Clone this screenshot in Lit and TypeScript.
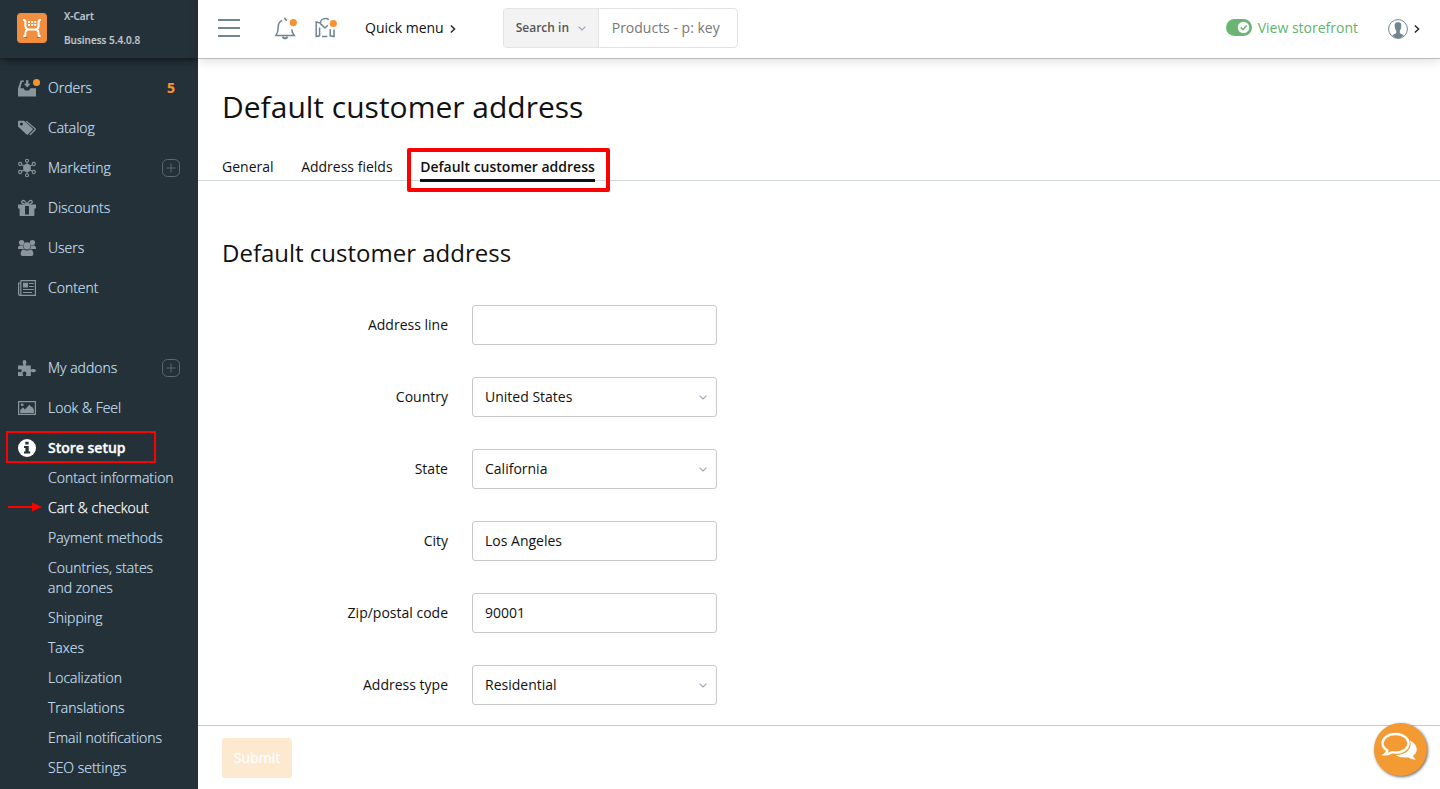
import { LitElement, html, css, svg } from "lit";
import { customElement } from "lit/decorators.js";
import { classMap } from "lit/directives/class-map.js";

const glyphs: Record<string, unknown> = {
  orders: svg`<path d="M0 9.6 2.6 1.4H6L5.6 3H4L2.3 9.2H5.6L7 11.6H11L12.4 9.2H18V17.4H0Z"/><path d="M8 1.2H10.4V4.8H12.6L9.2 8.6 5.8 4.8H8Z"/>`,
  catalog: svg`<path fill-rule="evenodd" d="M0 2.6Q0 1.8.8 1.8H6L14.6 9.6Q15.2 10.2 14.6 10.8L9.8 15.6Q9.2 16.2 8.6 15.6L0 7.6ZM3.4 3.4A1.6 1.6 0 1 0 3.4 6.6 1.6 1.6 0 1 0 3.4 3.4Z"/><path d="M8.2 2.2 17 9.6Q17.4 10.2 17 10.8L11.8 16" fill="none" stroke="currentColor" stroke-width="1.3"/>`,
  marketing: svg`<circle cx="9" cy="9" r="3.9"/><g fill="none" stroke="currentColor" stroke-width="1.1"><circle cx="9" cy="1.8" r="1.5"/><circle cx="9" cy="16.2" r="1.5"/><circle cx="2.2" cy="5" r="1.6"/><circle cx="15.8" cy="5" r="1.6"/><circle cx="2.2" cy="13" r="1.6"/><circle cx="15.8" cy="13" r="1.6"/><path d="M9 3.3V5.5M9 12.5V14.7M3.7 5.8 6 7.1M14.3 5.8 12 7.1M3.7 12.2 6 10.9M14.3 12.2 12 10.9"/></g>`,
  discounts: svg`<path fill-rule="evenodd" d="M0 5.4H18V9.4H16.4V16.2Q16.4 17 15.6 17H2.4Q1.6 17 1.6 16.2V9.4H0ZM7 7V15.4H11V7Z"/><path d="M8.8 5.4C3.5 5 3.2 3 4 2.1 5.2.8 7.5 1.8 8.8 5.2ZM9.2 5.4C14.5 5 14.8 3 14 2.1 12.8.8 10.5 1.8 9.2 5.2Z" fill="none" stroke="currentColor" stroke-width="1.3"/>`,
  users: svg`<circle cx="3.6" cy="3.6" r="2.7"/><circle cx="14.4" cy="3.6" r="2.7"/><path d="M0 9.4Q0 6.5 2.4 6.5H5Q5 9 6.4 10H0ZM18 9.4Q18 6.5 15.6 6.5H13Q13 9 11.6 10H18Z"/><circle cx="9" cy="6.8" r="3.6"/><path d="M2.6 15Q2.6 10.6 6 10.4 9 12.4 12 10.4 15.4 10.6 15.4 15 15.4 17 13.4 17H4.6Q2.6 17 2.6 15Z"/>`,
  content: svg`<path d="M2.8 1.6H17.4V16.4H2Q.6 16.4.6 15V4H2.8M2.8 1.6V15Q2.8 16.2 2 16.4" fill="none" stroke="currentColor" stroke-width="1.2"/><path d="M5 3.8H10V8.6H5ZM11 4H15.8V5.1H11ZM11 7H15.8V8.1H11ZM5 10H15.8V11.1H5ZM5 12.9H14V14H5Z"/>`,
  addons: svg`<path d="M0 6.6H5.3C6 6 4.6 5 4.6 3.2Q4.6 1 6.5 1T8.4 3.2C8.4 5 7.2 6 7.9 6.6H12.8V10.2C13.4 10.9 14 9.9 15.6 9.9Q18 9.9 18 11.6T15.6 13.3C14 13.3 13.4 12.3 12.8 13V17H8.2C7.4 16.2 8.5 15.4 8.5 14.2Q8.5 12.6 6.5 12.6T4.5 14.2C4.5 15.4 5.6 16.2 5 17H0V13.2C.6 12.4 1.1 13.2 2.2 13.2 3.2 13.2 3.7 12.6 3.7 11.7S3.2 10.2 2.2 10.2C1.1 10.2.6 11 0 10.3Z"/>`,
  look: svg`<path d="M.6 2.6H17.4V15.4H.6Z" fill="none" stroke="currentColor" stroke-width="1.2"/><circle cx="4.2" cy="5.8" r="1.4"/><path d="M2.2 14V11L5 8.6 7 10.6 11.6 5.6 13 8 14 7.4 15.9 10.4V14Z"/>`,
  setup: svg`<circle cx="9" cy="9" r="9"/><path fill="#253138" d="M7.3 2.8H10.6V5.6H7.3ZM6 7H10.7V12.6H12.2V14.6H6V12.6H7.4V9H6Z"/>`,
};

interface Item { id: string; label: string; count?: number; plus?: boolean; dot?: boolean; active?: boolean }

const storeItems: Item[] = [
  { id: "orders", label: "Orders", count: 5, dot: true },
  { id: "catalog", label: "Catalog" },
  { id: "marketing", label: "Marketing", plus: true },
  { id: "discounts", label: "Discounts" },
  { id: "users", label: "Users" },
  { id: "content", label: "Content" },
];
const systemItems: Item[] = [
  { id: "addons", label: "My addons", plus: true },
  { id: "look", label: "Look & Feel" },
  { id: "setup", label: "Store setup", active: true },
];
const setupLinks = ["Contact information", "Cart & checkout", "Payment methods", "Countries, states and zones", "Shipping", "Taxes", "Localization", "Translations", "Email notifications", "SEO settings"];

const chevron = html`<svg class="chev" width="8" height="5" viewBox="0 0 8 5"><path d="M.6.6 4 4 7.4.6" fill="none" stroke="#a0a4b8" stroke-width="1.1"/></svg>`;
const arrow = html`<svg width="6" height="10" viewBox="0 0 6 10"><path d="M.9 1.4 4.6 5 .9 8.6" fill="none" stroke="#222" stroke-width="1.4"/></svg>`;

@customElement("side-menu")
class SideMenu extends LitElement {
  static styles = css`
    :host { display: flex; flex-direction: column; background: #253138; color: #cfe4fb; overflow: hidden; font: 300 14px/20px "Open Sans", sans-serif; -webkit-text-stroke: 0.15px currentColor; }
    .brand { height: 58px; flex: none; display: flex; align-items: center; box-sizing: border-box; padding-left: 17px; gap: 17px; box-shadow: 0 1px 8px #0a1014; position: relative; color: #c0c8cd; }
    .names { font: 600 10px/24px "Open Sans", sans-serif; padding-bottom: 2px; }
    .logo { margin-bottom: 2px; }
    .list { padding-top: 10px; }
    .list + .list { padding-top: 40px; }
    .row { height: 40px; display: flex; align-items: center; padding: 0 18px; position: relative; }
    .icon { width: 18px; height: 18px; fill: currentColor; color: #8b959d; margin-right: 12px; flex: none; }
    .label { flex: 1; }
    .count { color: #f59331; font-weight: 700; margin-right: 5px; }
    .dot { position: absolute; left: 33px; top: 11px; width: 7px; height: 7px; border-radius: 50%; background: #f59331; }
    .active { color: #fff; font-weight: 600; -webkit-text-stroke-width: 0.35px; }
    .active .icon { color: #fff; }
    .frame { position: absolute; left: 6px; top: 3px; width: 150px; height: 32px; box-sizing: border-box; border: 2px solid #f00; }
    .sub { display: flex; flex-direction: column; padding-left: 48px; margin-top: -5px; }
    .link { padding: 5px 0; max-width: 130px; position: relative; }
    .current { color: #fff; -webkit-text-stroke-width: 0.25px; }
    .pointer { position: absolute; left: -40px; top: 9px; }
  `;

  row(i: Item) {
    return html`<div class=${classMap({ row: true, active: !!i.active })}>
      <svg class="icon" viewBox="0 0 18 18">${glyphs[i.id]}</svg>
      ${i.dot ? html`<span class="dot"></span>` : ""}
      <span class="label">${i.label}</span>
      ${i.count ? html`<span class="count">${i.count}</span>` : ""}
      ${i.plus ? html`<svg width="18" height="18" fill="none" stroke="#5c676e"><rect x=".5" y=".5" width="17" height="17" rx="5"/><path d="M4.5 9H13.5M9 4.5V13.5"/></svg>` : ""}
      ${i.active ? html`<span class="frame"></span>` : ""}
    </div>`;
  }

  render() {
    return html`
      <div class="brand">
        <svg class="logo" width="30" height="30" viewBox="0 0 30 30"><rect width="30" height="30" rx="4" fill="#f18f3f"/><circle cx="9" cy="23.8" r="1.3" fill="#b8482c"/><circle cx="21.2" cy="23.8" r="1.3" fill="#b8482c"/><path d="M6 7H6.8Q8.4 7 8.4 8.6V12.4Q8.4 16.4 12 16.4H18Q21.6 16.4 21.6 12.4V8.6Q21.6 7 23.2 7H24M10.6 16.4Q8.4 17.6 8.4 20V22.9H6.4M19.4 16.4Q21.6 17.6 21.6 20V22.9H23.6" fill="none" stroke="#fff" stroke-width="2"/><path d="M11 9H19.2M11 12H19.2" stroke="#fff" stroke-width="2" stroke-dasharray="2 1.1"/></svg>
        <div class="names"><div>X-Cart</div><div>Business 5.4.0.8</div></div>
      </div>
      <div class="list">${storeItems.map((i) => this.row(i))}</div>
      <div class="list">${systemItems.map((i) => this.row(i))}</div>
      <div class="sub">${setupLinks.map((l, n) => html`<div class=${classMap({ link: true, current: n === 1 })}>${l}${n === 1 ? html`<svg class="pointer" width="34" height="10"><path d="M0 5H26" stroke="#f00" stroke-width="2"/><path d="M24 .5 34 5 24 9.5Z" fill="#f00"/></svg>` : ""}</div>`)}</div>`;
  }
}

@customElement("top-bar")
class TopBar extends LitElement {
  static styles = css`
    :host { display: flex; align-items: center; height: 58px; padding: 0 20px; border-bottom: 1px solid #bcbcbc; box-shadow: 0 2px 10px #0002; background: #fff; box-sizing: content-box; position: relative; }
    svg { flex: none; }
    .burger { margin: 0 34px 2px 0; }
    .bell { margin-right: 18px; }
    .news { margin-right: 26px; }
    .quick { margin-right: 6px; padding-bottom: 2px; }
    .search { display: flex; width: 235px; height: 40px; box-sizing: border-box; border: 1px solid #e3e3e3; border-radius: 4px; margin: 0 auto 2px 47px; overflow: hidden; }
    .scope { box-sizing: content-box; width: 82px; background: #f3f3f3; border-right: 1px solid #e3e3e3; display: flex; align-items: center; gap: 9px; padding-left: 12px; font-size: 12px; font-weight: 600; color: #555; }
    .query { padding-left: 13px; line-height: 38px; color: #777; }
    .store { color: #62b46c; margin: 0 30px 2px 6px; }
    .switch { margin-bottom: 3px; }
    .user { margin-right: 6px; }
  `;

  render() {
    return html`
      <svg class="burger" width="22" height="20" stroke="#70858f" stroke-width="2"><path d="M0 2H22M0 10H22M0 18H22"/></svg>
      <svg class="bell" width="23" height="24" viewBox="0 0 23 24" fill="none" stroke="#70858f" stroke-width="1.5"><path d="M10.4 .6 11.6 2.6 13.2 3.3M8.2 3.4Q4.2 5 4.2 10.2C4.2 14.6 3.6 16.2 1.8 18.6H20.2C18.8 17 18 15.2 17.8 12.4"/><path d="M8.6 19.6Q9.2 21.4 11 21.4T13.4 19.6" stroke-width="2"/><circle cx="19.3" cy="5.6" r="3.6" fill="#f59331" stroke="none"/></svg>
      <svg class="news" width="24" height="24" viewBox="0 0 24 24" fill="none" stroke="#70858f" stroke-width="1.5"><path d="M5.4 6 1.2 5V19.6L4.6 18.8V10.6M7 19.6H12.4M15.2 12.2V18.8L19 19.6V12.6M5.4 6.6C5.4 3.2 7.8 1.4 10.2 1.4Q12.6 1.4 13.8 2.6M5.4 6.6 10 11 12.8 8.2"/><circle cx="18.3" cy="6.5" r="3.6" fill="#f59331" stroke="none"/></svg>
      <span class="quick">Quick menu</span>${arrow}
      <div class="search"><div class="scope">Search in ${chevron}</div><div class="query">Products - p: key</div></div>
      <svg class="switch" width="26" height="17" viewBox="0 0 26 17"><rect width="26" height="17" rx="8.5" fill="#69b571"/><circle cx="17.5" cy="8.5" r="5.8" fill="#fff"/><path d="M14.7 8.4 17 10.7 20.6 6.6" fill="none" stroke="#69b571" stroke-width="1.5"/></svg>
      <span class="store">View storefront</span>
      <svg class="user" width="20" height="20" viewBox="0 0 20 20"><circle cx="10" cy="10" r="9.4" fill="#fff" stroke="#70858f"/><path d="M10 3.2C13 3.2 13.6 5.2 13.3 7.6Q13.2 10.2 11.8 11.6V14Q13.5 15.2 15.8 16.2 13.4 19.2 10 19.2T4.2 16.2Q6.5 15.2 8.2 14V11.6Q6.8 10.2 6.7 7.6C6.4 5.2 7 3.2 10 3.2Z" fill="#70858f"/></svg>${arrow}`;
  }
}

@customElement("app-root")
class AppRoot extends LitElement {
  static styles = css`
    :host { display: grid; grid-template-columns: 198px 1fr; height: 789px; overflow: hidden; position: relative; background: #fff; color: #111; font: 400 14px/20px "Open Sans", sans-serif; }
    .main { display: flex; flex-direction: column; min-width: 0; min-height: 0; }
    .body { flex: 1; }
    .title { font-size: 30px; line-height: 40px; font-weight: 400; margin: 28px 24px 0; }
    .tabs { display: flex; gap: 27.6px; padding: 30px 24px 0; height: 23px; border-bottom: 1px solid #d3d8db; }
    .tab { height: 22px; }
    .on { font-weight: 600; border-bottom: 3px solid #111; position: relative; }
    .on::after { content: ""; position: absolute; left: -13px; right: -15px; top: -9px; height: 36px; border: 4px solid #f00; border-radius: 2px; }
    .sub { font-size: 24px; line-height: 32px; font-weight: 400; margin: 56px 24px 36px; }
    .form { display: grid; grid-template-columns: 226px 245px; column-gap: 24px; row-gap: 32px; padding-left: 24px; }
    .name { text-align: right; line-height: 40px; }
    .field { height: 40px; box-sizing: border-box; border: 1px solid #c9c9c9; border-radius: 3px; padding: 0 9px 0 12px; display: flex; align-items: center; justify-content: space-between; }
    .foot { border-top: 1px solid #c9c9c9; padding: 12px 24px 0; box-sizing: border-box; height: 64px; }
    .submit { display: block; width: 70px; height: 40px; border: 0; padding: 0; border-radius: 3px; background: #fce9d0; color: #fff; font: 400 14px/40px "Open Sans", sans-serif; -webkit-text-stroke: 0.3px #fff; }
    .chat { position: absolute; right: 13px; bottom: 13px; width: 53px; height: 53px; border-radius: 50%; background: #f39a32; box-shadow: 1px 1px 3px #0009; }
  `;

  fields: [string, string, boolean][] = [
    ["Address line", "", false],
    ["Country", "United States", true],
    ["State", "California", true],
    ["City", "Los Angeles", false],
    ["Zip/postal code", "90001", false],
    ["Address type", "Residential", true],
  ];

  render() {
    return html`
      <side-menu></side-menu>
      <div class="main">
        <top-bar></top-bar>
        <div class="body">
          <h1 class="title">Default customer address</h1>
          <nav class="tabs"><span class="tab">General</span><span class="tab">Address fields</span><span class="tab on">Default customer address</span></nav>
          <h2 class="sub">Default customer address</h2>
          <div class="form">${this.fields.map(([n, v, s]) => html`<label class="name">${n}</label><div class="field"><span>${v}</span>${s ? chevron : ""}</div>`)}</div>
        </div>
        <div class="foot"><button class="submit" disabled>Submit</button></div>
      </div>
      <div class="chat"><svg width="53" height="53" viewBox="0 0 53 53"><path d="M36 17.5C45 22 44 30.5 39 32.5Q39.5 35 42 36.5 37.5 36.8 34 34.3 27.5 35.5 21.5 32.2C33 32 38.5 25 36 17.5Z" fill="#fff"/><path d="M21.5 11C29 11 34.5 15 34.5 20.3S29 29.6 21.5 29.6Q19.5 29.6 17.8 29.2 15 31.2 11 31.3 13.3 29.5 13.3 27.3 8.5 24.6 8.5 20.3C8.5 15 14 11 21.5 11Z" fill="#f39a32" stroke="#fff" stroke-width="2.4"/></svg></div>`;
  }
}
